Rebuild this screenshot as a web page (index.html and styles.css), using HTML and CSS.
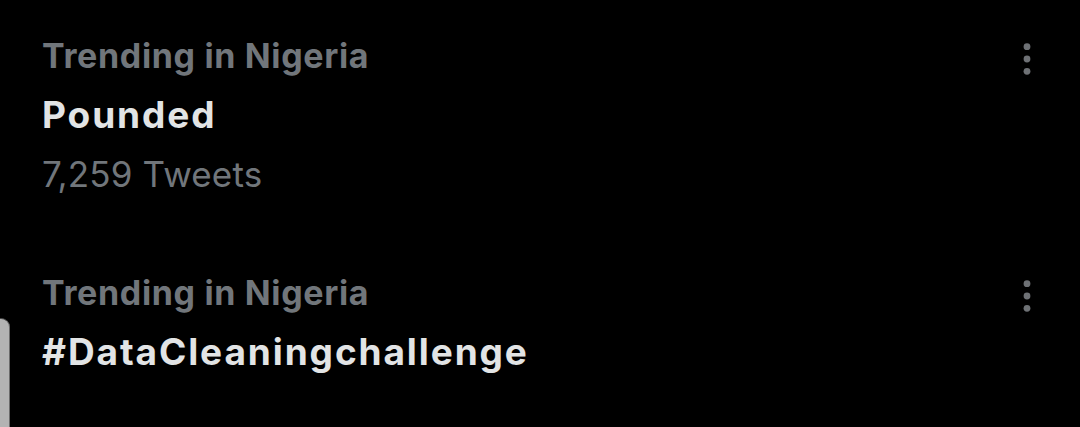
FILE: index.html
```html
<!DOCTYPE html>
<html lang="en">
<head>
<meta charset="utf-8">
<title>Trending</title>
<link rel="stylesheet" href="styles.css">
</head>
<body>
<main class="trends">
  <section class="trend">
    <div class="trend-text">
      <div class="meta">Trending in Nigeria</div>
      <div class="title">Pounded</div>
      <div class="count">7,259 Tweets</div>
    </div>
    <button class="more" aria-label="More">
      <svg width="10" height="34" viewBox="0 0 10 34"><circle cx="5" cy="4.7" r="3.4"/><circle cx="5" cy="17" r="3.4"/><circle cx="5" cy="29.3" r="3.4"/></svg>
    </button>
  </section>
  <section class="trend">
    <div class="trend-text">
      <div class="meta">Trending in Nigeria</div>
      <div class="title">#DataCleaningchallenge</div>
    </div>
    <button class="more" aria-label="More">
      <svg width="10" height="34" viewBox="0 0 10 34"><circle cx="5" cy="4.7" r="3.4"/><circle cx="5" cy="17" r="3.4"/><circle cx="5" cy="29.3" r="3.4"/></svg>
    </button>
  </section>
</main>
<div class="edge-tab"></div>
</body>
</html>
```
FILE: styles.css
```css
html, body {
  margin: 0;
  padding: 0;
  background: #000;
  height: 100%;
  overflow: hidden;
}
body {
  font-family: Inter, "Noto Sans", sans-serif;
  color: #e7e9ea;
  position: relative;
}
.trends {
  display: flex;
  flex-direction: column;
  padding: 27px 0 0 42px;
  gap: 61px;
}
.trend {
  display: flex;
  justify-content: space-between;
  align-items: flex-start;
  padding-right: 48px;
}
.trend-text {
  display: flex;
  flex-direction: column;
}
.meta {
  font-size: 34px;
  font-weight: 700;
  letter-spacing: 0.65px;
  line-height: 58px;
  color: #71767b;
}
.title {
  font-size: 37px;
  font-weight: 700;
  letter-spacing: 1.9px;
  line-height: 60px;
  color: #e2e4e5;
}
.count {
  font-size: 35px;
  font-weight: 400;
  letter-spacing: 0.15px;
  line-height: 58px;
  color: #71767b;
}
.more {
  background: none;
  border: 0;
  padding: 0;
  margin-top: 15px;
  display: flex;
}
.more svg {
  fill: #6e7175;
}
.edge-tab {
  position: absolute;
  left: 0;
  top: 318px;
  width: 9px;
  bottom: -10px;
  background: #b3b3b3;
  border-right: 1px solid #6a6a6a;
  border-top: 1px solid #444;
  border-top-right-radius: 9px;
}
```
